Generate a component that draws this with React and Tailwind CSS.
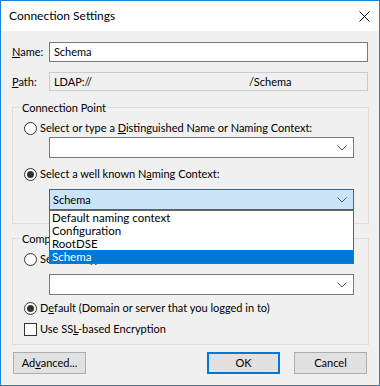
import React from 'react';

const Chevron = () => (
    <svg width="10" height="6" viewBox="0 0 10 6" className="shrink-0">
        <path d="M0.5 0.5 L5 5 L9.5 0.5" fill="none" stroke="#555" strokeWidth="1" />
    </svg>
);

const Radio = ({ checked }) => (
    <span className="flex h-[13px] w-[13px] shrink-0 items-center justify-center rounded-full border border-[#333] bg-white">
        {checked && <span className="h-[7px] w-[7px] rounded-full bg-[#333]" />}
    </span>
);

const Combo = ({ value, focused }) => (
    <div
        className={
            focused
                ? 'ml-[25px] flex h-[21px] w-[305px] items-center justify-between border border-[#0078d7] bg-[#cce4f7] pl-[3px] pr-[6px]'
                : 'ml-[25px] flex h-[21px] w-[305px] items-center justify-between border border-[#7a7a7a] bg-white pl-[3px] pr-[6px]'
        }
    >
        <span>{value}</span>
        <Chevron />
    </div>
);

const GroupLabel = ({ children }) => (
    <div className="-mt-[8px] -ml-[4px] h-[16px] w-fit bg-[#f0f0f0] px-[2px] leading-[16px]">{children}</div>
);

export default function App() {
    return (
        <div
            className="relative flex h-[386px] w-[380px] flex-col border border-[#1883d7] bg-[#f0f0f0] text-[11px] leading-[16px] text-black"
            style={{ fontFamily: 'Lato, sans-serif' }}
        >
            {/* title bar */}
            <div className="flex h-[30px] shrink-0 items-center justify-between bg-white pl-[8px] pr-[9px]">
                <span className="text-[12px]">Connection Settings</span>
                <svg width="11" height="11" viewBox="0 0 11 11">
                    <path d="M0.5 0.5 L10.5 10.5 M10.5 0.5 L0.5 10.5" stroke="#000" strokeWidth="1" />
                </svg>
            </div>

            <div className="flex flex-col px-[11px]">
                <div className="mt-[11px] flex items-center">
                    <span className="w-[37px]"><u>N</u>ame:</span>
                    <div className="flex h-[20px] w-[320px] items-center border border-[#7a7a7a] bg-white pl-[4px]">Schema</div>
                </div>
                <div className="mt-[10px] flex items-center">
                    <span className="w-[37px]"><u>P</u>ath:</span>
                    <div className="flex h-[19px] w-[320px] items-center border border-[#cccccc] bg-[#f0f0f0] pl-[4px]">
                        <span className="w-[195px]">LDAP://</span>
                        <span>/Schema</span>
                    </div>
                </div>

                {/* Connection Point */}
                <div className="mt-[16px] flex h-[117px] w-[357px] flex-col border border-[#dcdcdc] pl-[11px]">
                    <GroupLabel>Connection Point</GroupLabel>
                    <div className="mt-[4px] flex h-[16px] items-center gap-[3px]">
                        <Radio />
                        <span>Select or type a <u>D</u>istinguished Name or Naming Context:</span>
                    </div>
                    <div className="mt-[1px]"><Combo value="" /></div>
                    <div className="mt-[8px] flex h-[16px] items-center gap-[3px]">
                        <Radio checked />
                        <span>Select a well known N<u>a</u>ming Context:</span>
                    </div>
                    <div className="mt-[7px]"><Combo value="Schema" focused /></div>
                </div>

                {/* Computer */}
                <div className="mt-[14px] flex h-[107px] w-[357px] flex-col border border-[#dcdcdc] pl-[11px]">
                    <GroupLabel>Computer</GroupLabel>
                    <div className="mt-[4px] flex h-[16px] items-center gap-[3px]">
                        <Radio />
                        <span>Select or type a domain or server:</span>
                    </div>
                    <div className="mt-[7px]"><Combo value="" /></div>
                    <div className="mt-[5px] flex h-[16px] items-center gap-[3px]">
                        <Radio checked />
                        <span>D<u>e</u>fault (Domain or server that you logged in to)</span>
                    </div>
                    <div className="mt-[5px] flex h-[16px] items-center gap-[3px]">
                        <span className="h-[13px] w-[13px] shrink-0 border border-[#333] bg-white" />
                        <span>Use SS<u>L</u>-based Encryption</span>
                    </div>
                </div>

                {/* buttons */}
                <div className="mt-[7px] flex items-center pr-[1px]">
                    <button className="ml-[1px] h-[22px] w-[73px] border border-[#adadad] bg-[#e1e1e1]">Ad<u>v</u>anced...</button>
                    <button className="ml-auto h-[22px] w-[73px] border-2 border-[#0078d7] bg-[#e1e1e1]">OK</button>
                    <button className="ml-[14px] h-[22px] w-[73px] border border-[#adadad] bg-[#e1e1e1]">Cancel</button>
                </div>
            </div>

            {/* open dropdown list */}
            <div className="absolute left-[48px] top-[209px] flex w-[305px] flex-col border border-[#646464] bg-white text-[11.5px] leading-[13px]">
                <div className="h-[13px] pl-[2px]">Default naming context</div>
                <div className="h-[13px] pl-[2px]">Configuration</div>
                <div className="h-[13px] pl-[2px]">RootDSE</div>
                <div className="h-[13px] bg-[#0078d7] pl-[2px] text-white">Schema</div>
            </div>
        </div>
    );
}
